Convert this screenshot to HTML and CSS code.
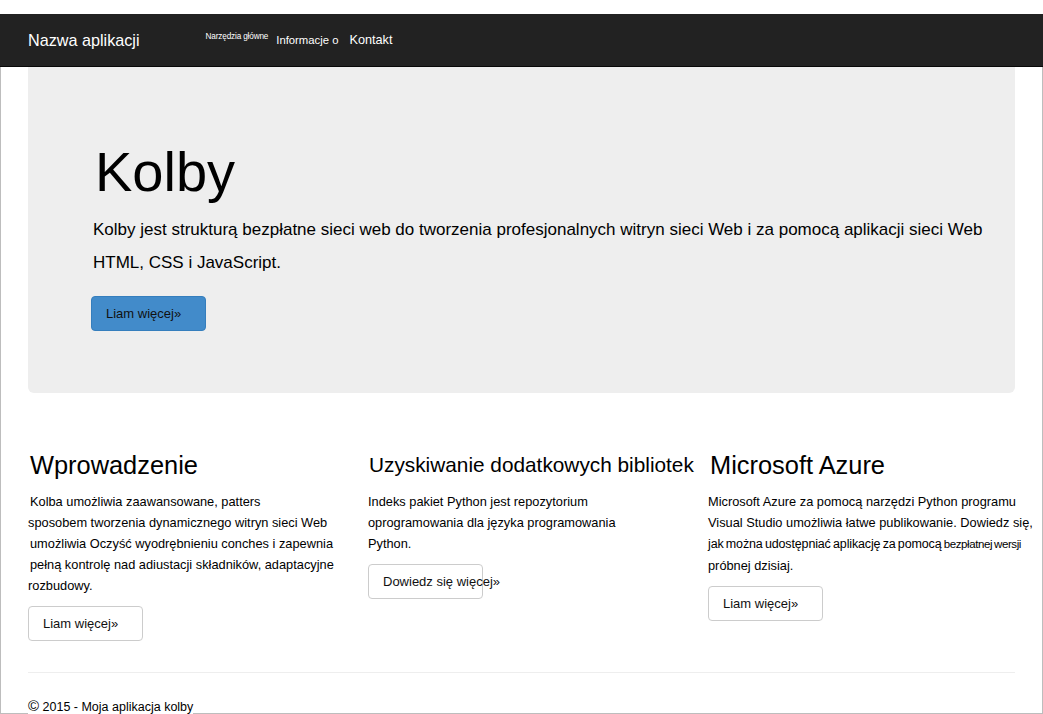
FILE: index.html
```html
<!DOCTYPE html>
<html lang="pl">
<head>
<meta charset="utf-8">
<title>Kolby</title>
<link rel="stylesheet" href="styles.css">
</head>
<body>
<div class="page">
  <nav class="navbar">
    <span class="brand">Nazwa aplikacji</span>
    <ul class="nav">
      <li class="nav-tiny">Narzędzia główne</li>
      <li class="nav-mid">Informacje o</li>
      <li class="nav-big">Kontakt</li>
    </ul>
  </nav>
  <div class="frame">
    <section class="jumbotron">
      <h1 class="jumbo-title">Kolby</h1>
      <p class="lead">Kolby jest strukturą bezpłatne sieci web do tworzenia profesjonalnych witryn sieci Web i za pomocą aplikacji sieci Web HTML, CSS i JavaScript.</p>
      <a class="btn btn-primary">Liam więcej»</a>
    </section>
    <div class="cols">
      <div class="col">
        <h2 class="col-title">Wprowadzenie</h2>
        <p class="col-text"><span class="ind">Kolba umożliwia zaawansowane, patters</span><br>sposobem tworzenia dynamicznego witryn sieci Web<br><span class="ind">umożliwia Oczyść wyodrębnieniu conches i zapewnia</span><br><span class="ind">pełną kontrolę nad adiustacji składników, adaptacyjne</span><br>rozbudowy.</p>
        <a class="btn btn-default">Liam więcej»</a>
      </div>
      <div class="col">
        <h2 class="col-title col-title-sm">Uzyskiwanie dodatkowych bibliotek</h2>
        <p class="col-text">Indeks pakiet Python jest repozytorium<br>oprogramowania dla języka programowania<br>Python.</p>
        <a class="btn btn-default btn-overflow">Dowiedz się więcej»</a>
      </div>
      <div class="col">
        <h2 class="col-title">Microsoft Azure</h2>
        <p class="col-text">Microsoft Azure za pomocą narzędzi Python programu<br>Visual Studio umożliwia łatwe publikowanie. Dowiedz się,<br><span class="tight">jak można udostępniać aplikację za pomocą <span class="tighter">bezpłatnej wersji</span></span><br>próbnej dzisiaj.</p>
        <a class="btn btn-default">Liam więcej»</a>
      </div>
    </div>
    <hr class="divider">
    <footer class="footer"><span class="copy">©</span> 2015 - Moja aplikacja kolby</footer>
  </div>
</div>
</body>
</html>
```

FILE: styles.css
```css
* { box-sizing: border-box; }
html, body {
  margin: 0;
  padding: 0;
  background: #fff;
}
body {
  font-family: "Liberation Sans", Arial, sans-serif;
  color: #000;
}
.page {
  padding-top: 14px;
  width: 1043px;
  height: 714px;
  overflow: hidden;
}
.navbar {
  height: 53px;
  background: #222;
  border-bottom: 1px solid #080808;
  display: flex;
  align-items: center;
  padding-left: 28px;
}
.brand {
  color: #fff;
  font-size: 16.2px;
  margin-right: 66px;
}
.nav {
  list-style: none;
  margin: 0;
  padding: 0;
  display: flex;
  align-items: center;
}
.nav li { color: #fff; }
.nav-tiny {
  font-size: 8.2px;
  letter-spacing: -0.15px;
  margin-right: 8px;
  position: relative;
  top: -4px;
}
.nav-mid {
  font-size: 11.3px;
  margin-right: 11px;
}
.nav-big {
  font-size: 12.7px;
}
.frame {
  border-left: 1px solid #bdbdbd;
  border-right: 1px solid #bdbdbd;
  border-bottom: 1px solid #bdbdbd;
  height: 647px;
}
.jumbotron {
  margin: 0 27px;
  background: #eee;
  border-radius: 0 0 6px 6px;
  padding: 74px 30px 61px 65px;
  height: 326px;
}
.jumbo-title {
  margin: 0 0 0 2px;
  font-size: 56px;
  font-weight: normal;
  line-height: 1.1;
}
.lead {
  margin: 10px 0 17px 0;
  font-size: 17px;
  line-height: 33px;
}
.btn {
  display: inline-flex;
  align-items: center;
  width: 115px;
  height: 35px;
  padding-left: 14px;
  font-size: 13px;
  color: #111;
  border-radius: 4px;
  white-space: nowrap;
}
.btn-primary {
  background: #428bca;
  border: 1px solid #357ebd;
  margin-left: -2px;
}
.btn-default {
  background: #fff;
  border: 1px solid #ccc;
}
.btn-overflow { overflow: visible; }
.cols {
  display: grid;
  grid-template-columns: 340px 340px 340px;
  padding-left: 27px;
  margin-top: 59px;
}
.col-title {
  margin: 0;
  font-size: 25.4px;
  font-weight: normal;
  line-height: 26px;
  padding-left: 2px;
}
.col-title-sm {
  font-size: 20.8px;
  padding-left: 1px;
}
.col-text {
  margin: 13px 0 10px;
  font-size: 12.8px;
  line-height: 21px;
  white-space: nowrap;
}
.ind { padding-left: 2px; }
.tight {
  font-size: 12.5px;
  letter-spacing: -0.15px;
  word-spacing: -1px;
}
.tighter {
  font-size: 11.5px;
  letter-spacing: -0.4px;
}
.divider {
  margin: 31px 27px 0;
  border: 0;
  border-top: 1px solid #eee;
}
.footer {
  margin: 24px 0 0 27px;
  font-size: 12.5px;
  background: #fff;
  display: inline-block;
  position: relative;
  z-index: 1;
}
.copy { font-size: 15px; }
```
